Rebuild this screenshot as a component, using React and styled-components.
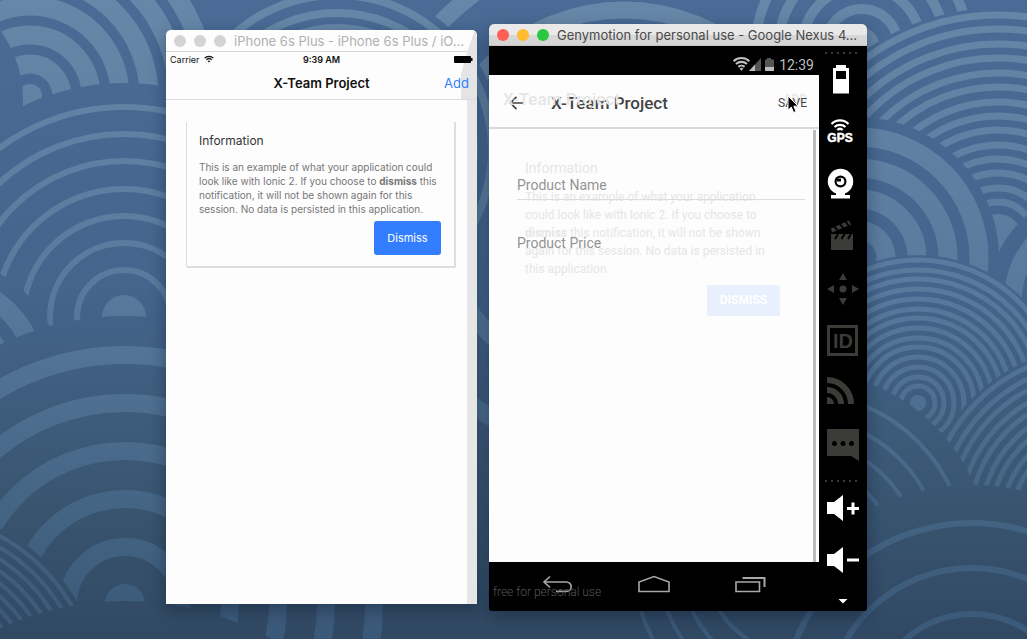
import React from "react";
import styled, { createGlobalStyle } from "styled-components";

const GlobalStyle = createGlobalStyle`
  * {
    box-sizing: border-box;
  }

  body {
    margin: 0;
    background: #3b5778;
  }

  button {
    padding: 0;
    border: 0;
    background: none;
    font: inherit;
    cursor: pointer;
  }
`;

const Desktop = styled.main`
  position: relative;
  z-index: 0;
  display: flex;
  justify-content: center;
  gap: 12px;
  min-height: 100vh;
  padding: 24px 0 28px 6px;
  overflow: hidden;
`;

const WallpaperSvg = styled.svg`
  position: absolute;
  inset: 0;
  z-index: -1;
  width: 100%;
  height: 100%;
`;

const Window = styled.section`
  display: flex;
  flex-direction: column;
  overflow: hidden;
  box-shadow: 0 6px 16px rgba(10, 20, 40, 0.4);
`;

const PhoneWindow = styled(Window)`
  position: relative;
  flex: 0 1 311px;
  margin: 6px 0 7px;
  border-radius: 5px 5px 0 0;
  background: #fdfdfd;
  font-family: Inter, "Liberation Sans", sans-serif;
`;

const DroidWindow = styled(Window)`
  flex: 0 1 378px;
  border-radius: 5px 5px 3px 3px;
  background: #000;
  font-family: Roboto, "Liberation Sans", sans-serif;
`;

const TitleBar = styled.header`
  display: flex;
  align-items: center;
  gap: 8px;
  height: 22px;
  padding: 0 8px;
  border-bottom: 1px solid ${(props) => (props.$active ? "#c4c4c4" : "#d6d6d6")};
  background: ${(props) =>
    props.$active
      ? "linear-gradient(#e9e9e9 50%, #d8d8d8 50%, #d4d4d4)"
      : "transparent"};
  color: ${(props) => (props.$active ? "#4a4a4a" : "#b0b0b0")};
  font-family: Inter, sans-serif;
  font-size: 13px;
  white-space: nowrap;
`;

const Light = styled.button`
  flex: none;
  width: 12px;
  height: 12px;
  border-radius: 50%;
  background: ${(props) => props.$color};
`;

const WindowTitle = styled.span`
  line-height: 20px;
`;

// Grey edge that shows behind the phone's bars
const TopEdge = styled.div`
  position: absolute;
  top: 0;
  right: 0;
  width: 16px;
  height: 70px;
  background: #e4e4e4;
  clip-path: polygon(14px 0, 100% 8px, 100% 100%, 0 100%, 0 44px, 8px 16px);
`;

const PhoneStatus = styled.div`
  position: relative;
  display: grid;
  grid-template-columns: 1fr auto 1fr;
  align-items: center;
  height: 14px;
  padding: 0 4px;
  color: #111;
  font-size: 9px;
`;

const Carrier = styled.span`
  display: flex;
  align-items: center;
  gap: 4px;
`;

const Clock = styled.span`
  font-weight: 600;
`;

const PhoneBattery = styled.svg`
  justify-self: end;
`;

const PhoneNav = styled.div`
  position: relative;
  display: grid;
  grid-template-columns: 1fr auto 1fr;
  align-items: center;
  height: 34px;
  padding: 0 8px;
  border-bottom: 1px solid #dcdcdc;
`;

const PhoneTitle = styled.h1`
  grid-column: 2;
  margin: 0;
  color: #111;
  font-size: 13px;
  font-weight: 600;
`;

const AddButton = styled.button`
  justify-self: end;
  color: #327eff;
  font-size: 13px;
`;

const PhoneContent = styled.div`
  flex: 1;
  padding: 22px 11px 0 20px;
  border-right: 10px solid #e6e6e6;
`;

const Card = styled.article`
  padding: 11px 13px 11px 12px;
  border: solid #dedede;
  border-width: 0 2px 2px 1px;
  border-radius: 0 0 2px 2px;
`;

const CardTitle = styled.h2`
  margin: 0 0 11px;
  color: #333;
  font-size: 12px;
  font-weight: 400;
  line-height: 16px;
`;

const CardText = styled.p`
  margin: 0 0 5px;
  color: #777;
  font-size: 10px;
  line-height: 14px;
`;

const DismissButton = styled.button`
  display: block;
  width: 67px;
  height: 34px;
  margin-left: auto;
  border-radius: 3px;
  background: #327eff;
  color: #fff;
  font-size: 11px;
`;

const DroidBody = styled.div`
  display: flex;
  flex: 1;
`;

const Screen = styled.div`
  position: relative;
  display: flex;
  flex: 1;
  flex-direction: column;
`;

const DroidStatus = styled.div`
  display: flex;
  align-items: center;
  justify-content: flex-end;
  gap: 4px;
  height: 29px;
  padding: 8px 5px 0 0;
  color: #bdbdbd;
  font-size: 14px;
`;

const AppBar = styled.div`
  position: relative;
  display: flex;
  align-items: center;
  height: 54px;
  padding: 3px 12px 0 20px;
  border-bottom: 2px solid #dadada;
  background: #fdfdfd;
  color: #444;
`;

const BackButton = styled.button`
  display: flex;
  width: 42px;
`;

const AppTitle = styled.h1`
  flex: 1;
  margin: 0;
  font-size: 17px;
  font-weight: 500;
`;

const SaveButton = styled.button`
  position: relative;
  color: #444;
  font-size: 12px;
`;

const Pointer = styled.svg`
  position: absolute;
  top: 20px;
  right: 20px;
`;

const FadingTitle = styled.span`
  position: absolute;
  top: 14px;
  left: 14px;
  color: #e6e6e6;
  font-size: 17px;
  font-weight: 500;
  line-height: 20px;
`;

const FadingAdd = styled.span`
  position: absolute;
  top: 14px;
  right: 12px;
  color: #e6e6e6;
  font-size: 12px;
  font-weight: 500;
  line-height: 20px;
`;

const AppContent = styled.div`
  position: relative;
  flex: 1;
  padding: 43px 14px 0 28px;
  background: #fdfdfd;
`;

const Scrollbar = styled.div`
  position: absolute;
  top: 1px;
  right: 3px;
  bottom: 0;
  width: 3px;
  background: #bdbdbd;
`;

const FadingCard = styled.div`
  position: absolute;
  top: 30px;
  right: 39px;
  left: 36px;
  color: #e6e6e6;
`;

const FadingHeading = styled.div`
  margin-bottom: 11px;
  font-size: 14px;
  line-height: 18px;
`;

const FadingText = styled.p`
  margin: 0 0 7px;
  font-size: 12px;
  line-height: 18px;
`;

const FadingButton = styled.div`
  width: 73px;
  margin-left: auto;
  border-radius: 2px;
  background: #e8f0fe;
  color: #fff;
  font-size: 12px;
  font-weight: 700;
  line-height: 31px;
  text-align: center;
`;

const Field = styled.div`
  position: relative;
  display: grid;
  height: 28px;
  margin-bottom: 30px;
`;

const FieldLabel = styled.label`
  grid-area: 1 / 1;
  align-self: start;
  color: #949494;
  font-size: 14px;
  line-height: 26px;
`;

const FieldInput = styled.input`
  grid-area: 1 / 1;
  min-width: 0;
  padding: 0;
  border: 0;
  border-bottom: 1px solid ${(props) => (props.$line ? "#dcdcdc" : "transparent")};
  background: transparent;
  outline: none;
`;

const SoftKeys = styled.nav`
  position: relative;
  display: flex;
  justify-content: center;
  height: 49px;
`;

const SoftKey = styled.button`
  display: flex;
  align-items: center;
  justify-content: center;
  width: 96px;
`;

const Licence = styled.span`
  position: absolute;
  bottom: 10px;
  left: 4px;
  color: #555;
  font-size: 12px;
  font-weight: 300;
  line-height: 18px;
`;

const Rail = styled.aside`
  display: flex;
  flex: none;
  flex-direction: column;
  width: 48px;
`;

const RailButton = styled.button`
  display: block;
  height: 52px;
  color: ${(props) => (props.$on ? "#fff" : "#3b3b37")};

  svg {
    display: block;
  }
`;

const Dots = styled.div`
  display: flex;
  align-items: flex-end;
  justify-content: space-between;
  height: ${(props) => props.$height};
  padding: 0 10px 0 6px;

  i {
    width: 2px;
    height: 2px;
    background: #3b3b37;
  }
`;

const MoreButton = styled.button`
  display: block;

  svg {
    display: block;
  }
`;

const domes = [
  { x: 30, y: 96, cover: 190, blob: 12, rings: [32, 61, 90, 119, 148, 177], width: 19 },
  { x: -95, y: 100, cover: 118, rings: [], width: 0 },
  { x: 624, y: 200, cover: 275, rings: [255, 190], width: 17 },
  { x: 337, y: 150, cover: 166, rings: [155, 137, 122], width: 8 },
  { x: 862, y: 45, cover: 125, blob: 17, rings: [36, 59, 83, 106], width: 10 },
  {
    x: 998,
    y: 238,
    cover: 230,
    blob: 24,
    rings: [223, 209, 194, 180, 165, 151, 136, 122, 108, 93, 79, 65, 50, 36],
    width: 7,
  },
  { x: 858, y: 258, cover: 141, rings: [121, 90, 59, 28], width: 19 },
  { x: 1100, y: 300, cover: 112, rings: [87], width: 18 },
  {
    x: 918,
    y: 403,
    cover: 148,
    blob: 8,
    rings: [143, 133, 124, 114, 104, 94, 85, 75, 65, 56, 46, 36, 26, 17],
    width: 5,
  },
  { x: 124, y: 317, cover: 234, blob: 22, rings: [210, 183, 156, 128, 101, 74, 47], width: 6 },
  { x: -60, y: 380, cover: 122, rings: [97, 65], width: 19 },
  { x: 125, y: 604, cover: 288, blob: 20, rings: [249, 201, 153, 105, 57], width: 18 },
  {
    x: 1095,
    y: 520,
    cover: 173,
    rings: [167, 156, 146, 135, 125, 114, 104, 93, 83],
    width: 5,
  },
  { x: 800, y: 560, cover: 190, rings: [167, 142, 119, 95], width: 4 },
  { x: 972, y: 714, cover: 229, rings: [191, 146, 100], width: 6 },
  {
    x: -90,
    y: 700,
    cover: 194,
    rings: [187, 177, 167, 157, 147, 137, 127, 117],
    width: 4,
  },
  { x: 125, y: 900, cover: 299, rings: [], width: 0 },
];

function Wallpaper() {
  return (
    <WallpaperSvg viewBox="0 0 1027 639" preserveAspectRatio="xMidYMid slice" aria-hidden="true">
      <defs>
        <linearGradient id="sea" gradientUnits="userSpaceOnUse" x1="0" y1="0" x2="0" y2="639">
          <stop offset="0" stopColor="#496b95" />
          <stop offset="0.45" stopColor="#44658c" />
          <stop offset="0.8" stopColor="#38546f" />
          <stop offset="1" stopColor="#314863" />
        </linearGradient>
        <linearGradient id="foam" gradientUnits="userSpaceOnUse" x1="0" y1="0" x2="0" y2="639">
          <stop offset="0" stopColor="#6787a8" />
          <stop offset="0.45" stopColor="#587a9d" />
          <stop offset="0.8" stopColor="#446484" />
          <stop offset="1" stopColor="#3a5878" />
        </linearGradient>
      </defs>
      <rect width="1027" height="639" fill="url(#sea)" />
      {domes.map((dome) => (
        <g key={`${dome.x},${dome.y}`} fill="none">
          <circle cx={dome.x} cy={dome.y} r={dome.cover} fill="url(#sea)" />
          {dome.rings.map((r) => (
            <circle
              key={r}
              cx={dome.x}
              cy={dome.y}
              r={r}
              stroke="url(#foam)"
              strokeWidth={dome.width}
            />
          ))}
          {dome.blob && <circle cx={dome.x} cy={dome.y} r={dome.blob} fill="url(#foam)" />}
        </g>
      ))}
    </WallpaperSvg>
  );
}

function PhoneSimulator() {
  return (
    <PhoneWindow>
      <TopEdge />
      <TitleBar>
        <Light $color="#d4d4d4" aria-label="Close" />
        <Light $color="#d4d4d4" aria-label="Minimise" />
        <Light $color="#d4d4d4" aria-label="Zoom" />
        <WindowTitle>iPhone 6s Plus - iPhone 6s Plus / iO...</WindowTitle>
      </TitleBar>
      <PhoneStatus>
        <Carrier>
          Carrier
          <svg width="10" height="8" viewBox="0 0 10 8" fill="none" stroke="#111">
            <path d="M0.6 3.1a6.3 6.3 0 0 1 8.8 0" strokeWidth="1.3" />
            <path d="M2.3 4.8a3.9 3.9 0 0 1 5.4 0" strokeWidth="1.3" />
            <path d="M3.6 6.1a2 2 0 0 1 2.8 0L5 7.6z" fill="#111" stroke="none" />
          </svg>
        </Carrier>
        <Clock>9:39 AM</Clock>
        <PhoneBattery width="19" height="7" viewBox="0 0 19 7">
          <rect width="17" height="7" rx="1" />
          <rect x="17" y="2" width="1.5" height="3" />
        </PhoneBattery>
      </PhoneStatus>
      <PhoneNav>
        <PhoneTitle>X-Team Project</PhoneTitle>
        <AddButton>Add</AddButton>
      </PhoneNav>
      <PhoneContent>
        <Card>
          <CardTitle>Information</CardTitle>
          <CardText>
            This is an example of what your application could look like with Ionic 2. If you
            choose to <b>dismiss</b> this notification, it will not be shown again for this
            session. No data is persisted in this application.
          </CardText>
          <DismissButton>Dismiss</DismissButton>
        </Card>
      </PhoneContent>
    </PhoneWindow>
  );
}

function DroidScreen() {
  return (
    <Screen>
      <DroidStatus>
        <svg width="42" height="15" viewBox="0 0 42 15" fill="none">
          <g stroke="#bdbdbd" strokeWidth="2.1">
            <path d="M0.6 4.2a11.5 11.5 0 0 1 15.8 0" />
            <path d="M3 7.1a8 8 0 0 1 11 0" />
            <path d="M5.4 9.9a4.6 4.6 0 0 1 6.2 0" />
          </g>
          <path d="M6.6 11.6a3 3 0 0 1 3.8 0L8.5 14z" fill="#bdbdbd" />
          <path d="M28 1v13H16z" fill="#555" />
          <path d="M22 7.5V14h-6z" fill="#bdbdbd" />
          <path d="M34 1h4v1.500h3V14h-9V2.500h2z" fill="#555" />
          <path d="M32 10h9v4h-9z" fill="#bdbdbd" />
        </svg>
        <span>12:39</span>
      </DroidStatus>
      <AppBar>
        <FadingTitle aria-hidden="true">X-Team Project</FadingTitle>
        <FadingAdd aria-hidden="true">ADD</FadingAdd>
        <BackButton aria-label="Back">
          <svg width="15" height="14" viewBox="0 0 15 14" fill="none" stroke="#444" strokeWidth="1.7">
            <path d="M7.500 0.800L1.500 7l6 6.200M1.500 7H14" />
          </svg>
        </BackButton>
        <AppTitle>X-Team Project</AppTitle>
        <SaveButton>SAVE</SaveButton>
        <Pointer width="12" height="19" viewBox="0 0 12 19">
          <path
            d="M1 1v14.200l3.300-3.100 2.300 5.400 2.500-1-2.300-5.300h4.400z"
            stroke="#fff"
            strokeWidth="1"
          />
        </Pointer>
      </AppBar>
      <AppContent>
        <FadingCard aria-hidden="true">
          <FadingHeading>Information</FadingHeading>
          <FadingText>
            This is an example of what your application could look like with Ionic 2. If you
            choose to <b>dismiss</b> this notification, it will not be shown again for this
            session. No data is persisted in this application.
          </FadingText>
          <FadingButton>DISMISS</FadingButton>
        </FadingCard>
        <Field>
          <FieldLabel htmlFor="product-name">Product Name</FieldLabel>
          <FieldInput id="product-name" $line />
        </Field>
        <Field>
          <FieldLabel htmlFor="product-price">Product Price</FieldLabel>
          <FieldInput id="product-price" />
        </Field>
        <Scrollbar />
      </AppContent>
      <SoftKeys>
        <Licence>free for personal use</Licence>
        <SoftKey aria-label="Back">
          <svg width="32" height="32" viewBox="0 0 32 32" fill="none" stroke="#a8a8a8" strokeWidth="1.6">
            <path d="M8 5.500L2 11l6 5.500M2 11h22.500a4.700 4.700 0 0 1 0 9.400H14" />
          </svg>
        </SoftKey>
        <SoftKey aria-label="Home">
          <svg width="32" height="32" viewBox="0 0 32 32" fill="none" stroke="#a8a8a8" strokeWidth="1.6">
            <path d="M1 20.500v-9.500L16 5.500l15 5.500v9.500z" />
          </svg>
        </SoftKey>
        <SoftKey aria-label="Recent apps">
          <svg width="32" height="32" viewBox="0 0 32 32" fill="none" stroke="#a8a8a8" strokeWidth="1.6">
            <path d="M2 11h23.500v9.500H2z" />
            <path d="M8.500 7H30.500v9" strokeWidth="2" />
          </svg>
        </SoftKey>
      </SoftKeys>
    </Screen>
  );
}

function RailIcon({ label, on, children }) {
  return (
    <RailButton $on={on} aria-label={label}>
      <svg width="48" height="52" viewBox="0 0 48 52" fill="currentColor">
        {children}
      </svg>
    </RailButton>
  );
}

function DotRow({ height }) {
  return (
    <Dots $height={height}>
      <i />
      <i />
      <i />
      <i />
      <i />
      <i />
    </Dots>
  );
}

function DeviceRail() {
  return (
    <Rail>
      <DotRow height="8px" />
      <RailIcon label="Battery" on>
        <path fillRule="evenodd" d="M17 11h10v3h3v25.500H14V14h3zM17 17v8h10v-8z" />
      </RailIcon>
      <RailIcon label="GPS" on>
        <g fill="none" stroke="currentColor" strokeWidth="2.200">
          <path d="M12.500 18a12 12 0 0 1 17 0" />
          <path d="M15.500 21a8 8 0 0 1 11 0" />
          <path d="M18.300 24a4 4 0 0 1 5.400 0" />
        </g>
        <text
          x="21"
          y="36"
          textAnchor="middle"
          fontFamily="Liberation Sans, sans-serif"
          fontSize="12"
          fontWeight="700"
          stroke="currentColor"
          strokeWidth="0.5"
        >
          GPS
        </text>
      </RailIcon>
      <RailIcon label="Camera" on>
        <circle cx="21.500" cy="23.500" r="12.700" />
        <path d="M17 35h9v2h5v3.500H12V37h5z" />
        <circle cx="21.500" cy="23.500" r="6" fill="#000" />
        <circle cx="21.500" cy="23.500" r="3.800" />
        <path d="M18 20.500h4v3h-4z" fill="#000" />
      </RailIcon>
      <RailIcon label="Screencast">
        <path d="M12 24h22v16H12z" />
        <path d="M12 18.500L30 10.500l2 4L13 22.500z" />
        <path
          d="M15 16l4 5M20.500 13.500l4 5M26 11l4 5M19 24l-3 5M25.500 24l-3 5M32 24l-3 5"
          stroke="#000"
          strokeWidth="2"
        />
      </RailIcon>
      <RailIcon label="Move">
        <circle cx="24" cy="27" r="3.500" />
        <path d="M24 11l4 7h-8zM24 43l4-7h-8zM8 27l7-4v8zM40 27l-7-4v8z" />
      </RailIcon>
      <RailIcon label="Identifiers">
        <path d="M9.500 12.500h28v28h-28z" fill="none" stroke="currentColor" strokeWidth="3" />
        <text
          x="24"
          y="34"
          textAnchor="middle"
          fontFamily="Liberation Sans, sans-serif"
          fontSize="20"
          fontWeight="700"
        >
          ID
        </text>
      </RailIcon>
      <RailIcon label="Network">
        <path d="M8 31a7 7 0 0 1 7 7H8z" />
        <g fill="none" stroke="currentColor" strokeWidth="6">
          <path d="M8 24a14 14 0 0 1 14 14" />
          <path d="M8 14a24 24 0 0 1 24 24" />
        </g>
      </RailIcon>
      <RailIcon label="Messages">
        <path d="M8 11h32v32l-8-5H8z" />
        <g fill="#000">
          <circle cx="15.500" cy="25.500" r="2.500" />
          <circle cx="24" cy="25.500" r="2.500" />
          <circle cx="32.500" cy="25.500" r="2.500" />
        </g>
      </RailIcon>
      <DotRow height="12px" />
      <RailIcon label="Volume up" on>
        <path d="M8 20h7l9-7v26l-9-7H8z" />
        <path d="M28 25h4.500v-4.500h3V25H40v3h-4.500v4.500h-3V28H28z" />
      </RailIcon>
      <RailIcon label="Volume down" on>
        <path d="M8 20h7l9-7v26l-9-7H8z" />
        <path d="M28 24.500h12v3H28z" />
      </RailIcon>
      <MoreButton aria-label="More">
        <svg width="48" height="25" viewBox="0 0 48 25" fill="#fff">
          <path d="M19.500 13h9L24 17.500z" />
        </svg>
      </MoreButton>
    </Rail>
  );
}

function App() {
  return (
    <>
      <GlobalStyle />
      <Desktop>
        <Wallpaper />
        <PhoneSimulator />
        <DroidWindow>
          <TitleBar $active>
            <Light $color="#ff5f57" aria-label="Close" />
            <Light $color="#febc2e" aria-label="Minimise" />
            <Light $color="#28c840" aria-label="Zoom" />
            <WindowTitle>Genymotion for personal use - Google Nexus 4...</WindowTitle>
          </TitleBar>
          <DroidBody>
            <DroidScreen />
            <DeviceRail />
          </DroidBody>
        </DroidWindow>
      </Desktop>
    </>
  );
}

export default App;
